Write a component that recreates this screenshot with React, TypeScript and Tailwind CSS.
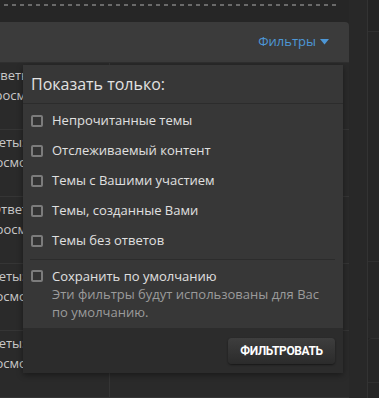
import React from "react";

const filters = [
  "Непрочитанные темы",
  "Отслеживаемый контент",
  "Темы с Вашими участием",
  "Темы, созданные Вами",
  "Темы без ответов",
];

const rows = [
  { a: "-ml-[16px]", b: "-ml-[15px]" },
  { a: "-ml-[25px]", b: "-ml-[22px]" },
  { a: "-ml-[9px]", b: "-ml-[14px]" },
  { a: "-ml-[25px]", b: "-ml-[22px]" },
  { a: "-ml-[25px]", b: "-ml-[22px]" },
];

function Checkbox() {
  return (
    <span className="block h-[12px] w-[12px] shrink-0 rounded-[2px] border-2 border-[#7c7c7c] bg-[#333]" />
  );
}

export default function App() {
  return (
    <div
      className="flex h-[398px] w-[379px] overflow-hidden bg-[#262626] text-[#dedede]"
      style={{ fontFamily: '"Open Sans", "Noto Sans", sans-serif' }}
    >
      <div className="relative flex w-[349px] shrink-0 flex-col">
        {/* dashed strip */}
        <div className="flex h-[22px] shrink-0 items-start pt-[4px]">
          <div className="ml-[4px] h-[2px] w-[334px] bg-[repeating-linear-gradient(90deg,#6a6a6a_0_4px,transparent_4px_8px)]" />
        </div>

        {/* header */}
        <div className="flex h-[41px] shrink-0 items-center justify-end rounded-tr-[4px] border-b border-[#2f2f2f] bg-[#3b3b3b] pr-[20px]">
          <span className="flex items-center gap-[4px] text-[13px] text-[#4d97d6]">
            Фильтры
            <svg width="9" height="6" viewBox="0 0 9 6">
              <path d="M0 0h9L4.5 5.5z" fill="#4d97d6" />
            </svg>
          </span>
        </div>

        {/* thread rows */}
        <div className="flex flex-col">
          {rows.map((r, i) => (
            <div
              key={i}
              className="flex h-[67px] shrink-0 border-b border-[#353535] bg-[#2a2a2a]"
            >
              <div className="w-[110px] shrink-0 overflow-hidden border-r border-[#353535] pt-[2px] text-[13px] leading-[20px] text-[#c8c8c8]">
                <div className={`whitespace-nowrap ${r.a}`}>Ответы: 3</div>
                <div className={`whitespace-nowrap ${r.b}`}>Просмотры: 120</div>
              </div>
              <div className="flex-1" />
            </div>
          ))}
        </div>

        {/* filter menu */}
        <div className="absolute left-[23px] top-[65px] flex w-[320px] flex-col bg-[#373737] shadow-[0_2px_6px_rgba(0,0,0,0.4)]">
          <div className="border-b border-[#2c2c2c] px-[8px] py-[7px] text-[16px] leading-[24px] text-[#e2e2e2]">
            Показать только:
          </div>
          <div className="flex flex-col pt-[2px]">
            {filters.map((f) => (
              <label
                key={f}
                className="flex h-[30px] items-center gap-[9px] px-[8px] text-[13px] text-[#e0e0e0]"
              >
                <Checkbox />
                {f}
              </label>
            ))}
          </div>
          <div className="ml-[7px] mr-[8px] mt-[3px] border-t border-[#2c2c2c]" />
          <div className="flex gap-[9px] px-[8px] pb-[7px] pt-[7px] text-[13px] leading-[18px]">
            <div className="shrink-0 pt-[3px]">
              <Checkbox />
            </div>
            <div className="min-w-0">
              <div className="text-[#e0e0e0]">Сохранить по умолчанию</div>
              <div className="text-[#9b9b9b]">
                Эти фильтры будут использованы для Вас по умолчанию.
              </div>
            </div>
          </div>
          <div className="flex h-[45px] items-start justify-end bg-[#2c2c2c] pr-[8px] pt-[10px]">
            <button
              className="h-[26px] w-[107px] rounded-[4px] bg-gradient-to-b from-[#3e3e3e] to-[#2b2b2b] text-[12px] font-bold tracking-[-0.4px] text-white shadow-[0_1px_2px_rgba(0,0,0,0.5)]"
              style={{ fontFamily: "Roboto, sans-serif" }}
            >
              ФИЛЬТРОВАТЬ
            </button>
          </div>
        </div>
      </div>

      <div className="w-[18px] shrink-0 bg-[#282828]" />

      {/* sidebar */}
      <div className="flex flex-1 flex-col border-l border-[#333] bg-[#222]">
        <div className="h-[32px] shrink-0 border-b border-[#303030] bg-[#242424]" />
        <div className="h-[230px] shrink-0 border-b border-[#303030] bg-[#262626]" />
        <div className="h-[58px] shrink-0 rounded-bl-[4px] bg-[#262626]" />
        <div className="h-[18px] shrink-0 bg-[#282828]" />
        <div className="h-[45px] shrink-0 rounded-tl-[4px] border-b border-t border-[#303030] bg-[#262626]" />
        <div className="flex-1 bg-[#262626]" />
      </div>
    </div>
  );
}
